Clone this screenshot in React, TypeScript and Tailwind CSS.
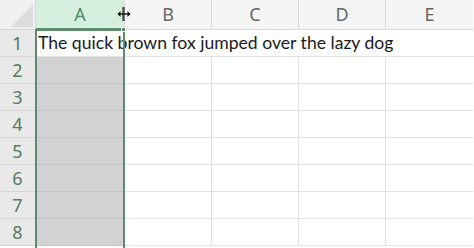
const cols = ["A", "B", "C", "D", "E"];
const rows = [1, 2, 3, 4, 5, 6, 7, 8];

const font = { fontFamily: '"Noto Sans", "Open Sans", sans-serif' };
const cellFont = { fontFamily: 'Lato, "Noto Sans", sans-serif' };

const ResizeCursor = () => (
  <svg width="16" height="16" viewBox="0 0 16 16" className="absolute left-[116px] top-[6px] z-40">
    <path d="M8 1v14M7 1v14" stroke="#111" strokeWidth="1" />
    <path d="M2 8h12" stroke="#111" strokeWidth="1.4" />
    <path d="M1.5 8l3-3v6z M14.5 8l-3-3v6z" fill="#111" />
  </svg>
);

export default function App() {
  return (
    <div className="relative w-[474px] h-[248px] overflow-hidden bg-white" style={font}>
      {/* header row */}
      <div className="flex h-[30px]">
        <div className="relative w-[36px] h-[30px] bg-[#f0f0f0] border-r border-b border-[#d6d6d6] overflow-hidden">
          <div className="absolute right-[2px] bottom-[2px] w-0 h-0 border-l-[22px] border-l-transparent border-b-[22px] border-b-[#dcdcdc]" />
        </div>
        <div className="w-[88px] h-[30px] bg-[#d4efde] border-b-2 border-[#5c8f6f] flex items-center justify-center text-[18px] text-[#4e8a64]">
          A
        </div>
        {cols.slice(1).map((c, i) => (
          <div
            key={c}
            className={`h-[30px] ${i === 3 ? "w-[88px]" : "w-[87px]"} bg-[#f5f5f5] border-l border-b border-[#dadada] flex items-center justify-center text-[18px] text-[#666666]`}
          >
            {c}
          </div>
        ))}
      </div>

      {rows.map((r) => (
        <div key={r} className="flex h-[27px]">
          <div className="w-[36px] h-[27px] bg-[#e8e9e8] border-r border-b border-[#d6d6d6] flex items-center justify-center text-[18px] text-[#567a62]">
            {r}
          </div>
          {r === 1 ? (
            <>
              <div className="relative w-[88px] h-[27px] bg-white border-b border-[#e2e2e2]">
                <span
                  className="absolute left-[2px] top-0 h-[27px] flex items-center whitespace-nowrap text-[17.6px] text-[#1a1a1a] z-10"
                  style={cellFont}
                >
                  The quick brown fox jumped over the lazy dog
                </span>
              </div>
              <div className="flex-1 h-[27px] border-b border-[#e2e2e2]" />
            </>
          ) : (
            <>
              <div className="w-[88px] h-[27px] bg-[#d2d2d2] border-b border-[#c6c6c6]" />
              {cols.slice(1).map((c, i) => (
                <div
                  key={c}
                  className={`h-[27px] ${i === 3 ? "w-[88px]" : "w-[87px]"} border-l border-b border-[#e2e2e2]`}
                />
              ))}
            </>
          )}
        </div>
      ))}

      {/* selection outline */}
      <div className="absolute left-[35px] top-[29px] w-[90px] h-[230px] border-2 border-[#5f8a70] z-20 pointer-events-none" />
      <div className="absolute left-[121px] top-[27px] w-[5px] h-[5px] bg-[#5f8a70] border border-white z-30" />

      <ResizeCursor />
    </div>
  );
}
